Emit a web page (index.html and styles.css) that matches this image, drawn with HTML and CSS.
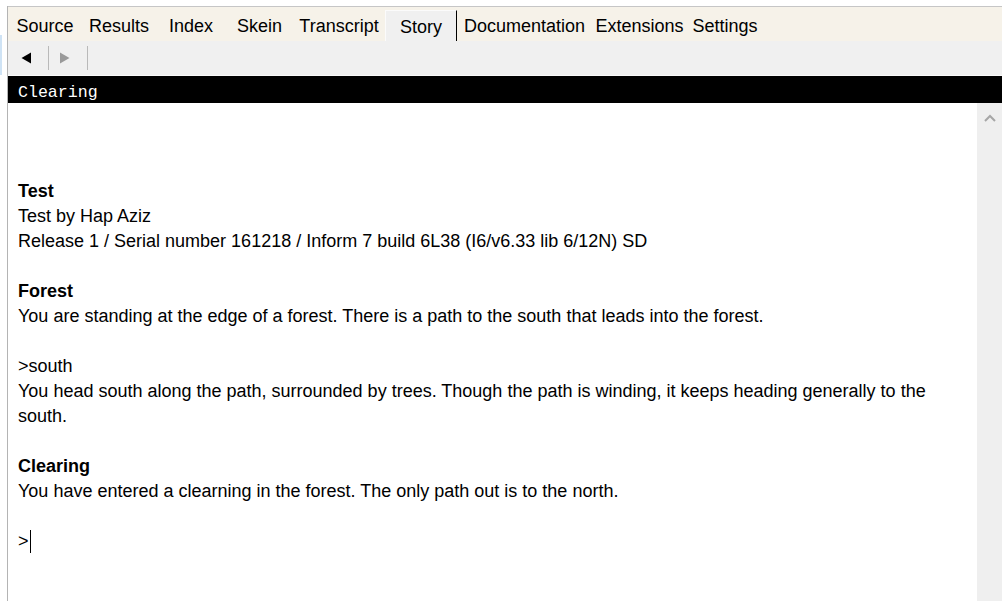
FILE: index.html
```html
<!DOCTYPE html>
<html>
<head>
<meta charset="utf-8">
<link rel="stylesheet" href="styles.css">
</head>
<body>
<div class="app">
  <div class="edge"><div class="edge-mark"></div></div>
  <div class="main">
    <nav class="tabs">
      <div class="tab">Source</div>
      <div class="tab">Results</div>
      <div class="tab">Index</div>
      <div class="tab">Skein</div>
      <div class="tab">Transcript</div>
      <div class="tab active">Story</div>
      <div class="tab">Documentation</div>
      <div class="tab">Extensions</div>
      <div class="tab">Settings</div>
    </nav>
    <div class="toolbar">
      <button class="nav-btn"><svg width="12" height="12" viewBox="0 0 12 12"><path d="M11 0.5 L11 11.5 L1.5 6 Z" fill="#000"/></svg></button>
      <span class="sep"></span>
      <button class="nav-btn"><svg width="12" height="12" viewBox="0 0 12 12"><path d="M1 0.5 L1 11.5 L10.5 6 Z" fill="#9a9a9a"/></svg></button>
      <span class="sep"></span>
    </div>
    <div class="status">Clearing</div>
    <div class="story">
      <div class="transcript">
        <p class="line"><b>Test</b></p>
        <p class="line">Test by Hap Aziz</p>
        <p class="line">Release 1 / Serial number 161218 / Inform 7 build 6L38 (I6/v6.33 lib 6/12N) SD</p>
        <p class="line blank"></p>
        <p class="line"><b>Forest</b></p>
        <p class="line">You are standing at the edge of a forest. There is a path to the south that leads into the forest.</p>
        <p class="line blank"></p>
        <p class="line">&gt;south</p>
        <p class="line">You head south along the path, surrounded by trees. Though the path is winding, it keeps heading generally to the south.</p>
        <p class="line blank"></p>
        <p class="line"><b>Clearing</b></p>
        <p class="line">You have entered a clearning in the forest. The only path out is to the north.</p>
        <p class="line blank"></p>
        <p class="line prompt">&gt;<span class="caret"></span></p>
      </div>
      <div class="scrollbar">
        <svg class="chev" width="12" height="8" viewBox="0 0 12 8"><path d="M1 7 L6 2 L11 7" fill="none" stroke="#a6a6a6" stroke-width="2"/></svg>
      </div>
    </div>
  </div>
</div>
</body>
</html>
```

FILE: styles.css
```css
html, body {
  margin: 0;
  padding: 0;
  background: #ffffff;
}
body {
  font-family: "Liberation Sans", Arial, sans-serif;
  color: #000;
  overflow: hidden;
}
.app {
  display: flex;
  height: 601px;
  padding-top: 6px;
  box-sizing: border-box;
}
.edge {
  width: 7px;
  border-right: 1px solid #b4b4b4;
  position: relative;
  background: #fff;
}
.edge-mark {
  position: absolute;
  left: 0;
  top: 29px;
  width: 2px;
  height: 40px;
  background: #cfe3f5;
}
.main {
  flex: 1;
  display: flex;
  flex-direction: column;
  border-top: 1px solid #c6c6c6;
  min-width: 0;
}
.tabs {
  height: 34px;
  background: #f6f2e9;
  display: grid;
  grid-template-columns: 74px 74px 70px 67px 92px 72px 135px 95px 76px;
  font-size: 18px;
  align-items: stretch;
}
.tab {
  display: flex;
  align-items: center;
  justify-content: center;
  padding-top: 5px;
}
.tab.active {
  background: #f0f0f0;
  margin-top: 3px;
  padding-top: 2px;
  border-top: 1px solid #fbfbfb;
  border-left: 1px solid #fbfbfb;
  border-right: 1px solid #000;
}
.toolbar {
  height: 34px;
  background: #f0f0f0;
  display: flex;
  align-items: center;
  padding-left: 8px;
  border-bottom: 1px solid #fafafa;
}
.nav-btn {
  border: 0;
  background: transparent;
  padding: 0;
  width: 20px;
  height: 24px;
  display: flex;
  align-items: center;
  justify-content: center;
  margin: 0 12px 0 0;
}
.sep {
  width: 1px;
  height: 24px;
  background: #b9b9b9;
  margin-right: 6px;
}
.status {
  height: 27px;
  background: #000;
  color: #fff;
  font-family: "Liberation Mono", "DejaVu Sans Mono", monospace;
  font-size: 16.6px;
  line-height: 34px;
  padding-left: 10px;
  box-sizing: border-box;
}
.story {
  flex: 1;
  display: flex;
  min-height: 0;
}
.transcript {
  flex: 1;
  padding: 76px 20px 0 10px;
  font-size: 18px;
  line-height: 25px;
}
.line {
  margin: 0;
  min-height: 25px;
}
.caret {
  display: inline-block;
  width: 1px;
  height: 23px;
  background: #000;
  vertical-align: -6px;
  margin-left: 1px;
}
.scrollbar {
  width: 25px;
  background: #efefef;
  display: flex;
  justify-content: center;
  padding-top: 11px;
  box-sizing: border-box;
  align-items: flex-start;
}
.chev {
  display: block;
}
```
